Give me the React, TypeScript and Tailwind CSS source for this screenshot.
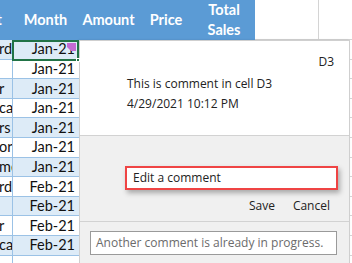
import React from 'react';

const rows: { frag: string; month: string }[] = [
  { frag: 'rd', month: 'Jan-21' },
  { frag: '', month: 'Jan-21' },
  { frag: 'r', month: 'Jan-21' },
  { frag: 'ca', month: 'Jan-21' },
  { frag: 'rs', month: 'Jan-21' },
  { frag: 'or', month: 'Jan-21' },
  { frag: 'me', month: 'Jan-21' },
  { frag: 'rd', month: 'Feb-21' },
  { frag: '', month: 'Feb-21' },
  { frag: 'r', month: 'Feb-21' },
  { frag: 'ca', month: 'Feb-21' },
  { frag: '', month: '' },
];

const cellFont = { fontFamily: 'Lato, "Liberation Sans", sans-serif' };
const uiFont = { fontFamily: '"Open Sans", "Noto Sans", sans-serif' };

const App: React.FC = () => {
  return (
    <div className="w-[352px] h-[263px] overflow-hidden bg-white flex flex-col" style={cellFont}>
      {/* Header row */}
      <div className="flex h-[40px] shrink-0">
        <div className="flex w-[255px] bg-[#5B9BD5] text-white font-bold text-[14.5px]">
          <div className="w-[13px] flex justify-end overflow-hidden items-center pr-[11px]">
            <span className="whitespace-nowrap">Product</span>
          </div>
          <div className="w-[65px] flex items-center justify-center">Month</div>
          <div className="w-[61px] flex items-center justify-center">Amount</div>
          <div className="w-[54px] flex items-center justify-center">Price</div>
          <div className="w-[62px] flex flex-col items-center justify-center leading-[20px]">
            <span>Total</span>
            <span>Sales</span>
          </div>
        </div>
        <div className="flex flex-1 border-b border-[#d4d4d4]">
          <div className="w-[64px] border-r border-[#d4d4d4]" />
          <div className="flex-1" />
        </div>
      </div>

      {/* Body */}
      <div className="flex flex-1 min-h-0">
        {/* Sheet columns */}
        <div className="relative w-[79px] shrink-0 flex flex-col">
          {rows.map((r, i) => (
            <div
              key={i}
              className={`flex h-[19.6px] shrink-0 border-b border-[#9BC2E6] text-[14.5px] text-[#111] ${
                i % 2 === 0 ? 'bg-[#DDEBF7]' : 'bg-white'
              }`}
            >
              <div className="w-[13px] overflow-hidden border-r border-[#9BC2E6] flex items-center">
                <span className="whitespace-nowrap -ml-[1px]">{r.frag}</span>
              </div>
              <div className="flex-1 flex items-center justify-end pr-[4px]">{r.month}</div>
            </div>
          ))}

          {/* active cell */}
          <div className="absolute left-[12px] top-0 w-[67px] h-[21px] border-2 border-[#217346]">
            <svg className="absolute right-[1px] top-[1px]" width="9" height="8" viewBox="0 0 9 8">
              <polygon points="0,0 9,0 9,8 4,8 0,4" fill="#C36BD3" />
            </svg>
            <div className="absolute -right-[3px] -bottom-[3px] w-[4px] h-[4px] bg-[#217346] border border-white" />
          </div>
        </div>

        {/* Comment pane */}
        <div
          className="flex flex-col w-[271px] shrink-0 border-l border-t border-r border-[#cfcfcf] bg-[#F0F0F0] shadow-[-1px_0_2px_rgba(0,0,0,0.12)]"
          style={uiFont}
        >
          <div className="h-[95px] shrink-0 bg-white border-b border-[#d2d2d2] text-[12px] text-[#222]">
            <div className="flex justify-end pr-[15px] pt-[14px] leading-[14px]">D3</div>
            <div className="pl-[47px] pt-[5px] leading-[20px]">
              <div>This is comment in cell D3</div>
              <div>4/29/2021 10:12 PM</div>
            </div>
          </div>

          <div className="h-[86px] shrink-0 border-b border-[#d2d2d2] pt-[30px] pl-[45px]">
            <div className="w-[213px] h-[24px] bg-white border-[2.5px] border-[#EF4444] shadow-[2px_3px_5px_rgba(0,0,0,0.3)] flex items-center pl-[6px] text-[12px] text-[#222]">
              Edit a comment
            </div>
            <div className="flex justify-end gap-[18px] pr-[19px] pt-[8px] text-[12px] text-[#222] leading-[16px]">
              <span>Save</span>
              <span>Cancel</span>
            </div>
          </div>

          <div className="pt-[9px] pl-[10px]">
            <div className="w-[247px] h-[24px] bg-white border border-[#9a9a9a] flex items-center pl-[5px] text-[12px] text-[#6b6b6b]">
              Another comment is already in progress.
            </div>
          </div>
        </div>

        {/* sliver of next column */}
        <div className="flex-1 flex flex-col">
          {rows.map((_, i) => (
            <div key={i} className="h-[19.6px] shrink-0 border-b border-[#d4d4d4]" />
          ))}
        </div>
      </div>
    </div>
  );
};

export default App;
